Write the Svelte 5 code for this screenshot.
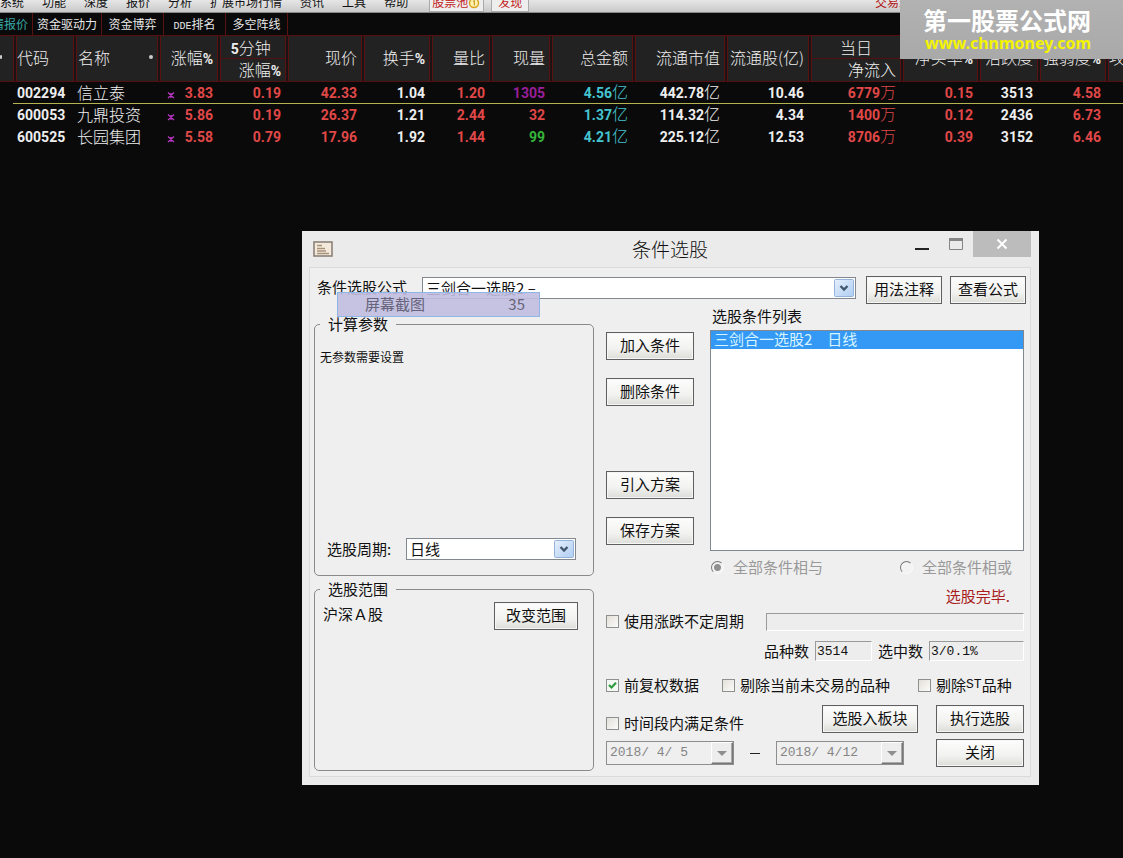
<script>
  const menu = ['系统', '功能', '深度', '报价', '分析', '扩展市场行情', '资讯', '工具', '帮助'];
  const tabs = ['资金驱动力', '资金博弈', 'DDE排名', '多空阵线'];
  const columns = [
    { w: 60, t: '代码', left: true },
    { w: 84, t: '名称', left: true, dot: true },
    { w: 60, t: '涨幅%' },
    { w: 68, t: '5分钟', t2: '涨幅%' },
    { w: 76, t: '现价' },
    { w: 68, t: '换手%' },
    { w: 60, t: '量比' },
    { w: 60, t: '现量' },
    { w: 83, t: '总金额' },
    { w: 92, t: '流通市值' },
    { w: 84, t: '流通股(亿)' },
    { w: 92, t: '当日', t2: '净流入' },
    { w: 77, t: '净买率%' },
    { w: 60, t: '活跃度' },
    { w: 68, t: '强弱度%' }
  ];
  const rows = [
    ['002294', '信立泰', '3.83', '0.19', '42.33', '1.04', '1.20', '1305', '4.56亿', '442.78亿', '10.46', '6779万', '0.15', '3513', '4.58'],
    ['600053', '九鼎投资', '5.86', '0.19', '26.37', '1.21', '2.44', '32', '1.37亿', '114.32亿', '4.34', '1400万', '0.12', '2436', '6.73'],
    ['600525', '长园集团', '5.58', '0.79', '17.96', '1.92', '1.44', '99', '4.21亿', '225.12亿', '12.53', '8706万', '0.39', '3152', '6.46']
  ];
  const base = ['w', 'w', 'r', 'r', 'r', 'w', 'r', 'r', 'c', 'w', 'w', 'r', 'r', 'w', 'r'];
  const volume = ['p', 'r', 'g'];
  const tone = (r, c) => (c === 7 ? volume[r] : base[c]);
</script>

{#snippet heading(t)}{#if t.endsWith('%')}{t.slice(0, -1)}<b>%</b>{:else if t.startsWith('5')}<b>5</b>{t.slice(1)}{:else}{t}{/if}{/snippet}

{#snippet figure(v)}{#if /[亿万]$/.test(v)}{v.slice(0, -1)}<em>{v.slice(-1)}</em>{:else}{v}{/if}{/snippet}

{#snippet arrow()}
  <svg class="arrow" viewBox="0 0 20 18" aria-hidden="true">
    <defs>
      <linearGradient id="blue" x1="0" y1="0" x2="1" y2="1">
        <stop offset="0" stop-color="#e6f0fd" />
        <stop offset="1" stop-color="#afcdf2" />
      </linearGradient>
    </defs>
    <rect x="0.5" y="0.5" width="19" height="17" rx="1" fill="url(#blue)" stroke="#93b3da" />
    <path d="M6.5 7 L10 10.5 L13.5 7" fill="none" stroke="#44566e" stroke-width="2.4" />
  </svg>
{/snippet}

{#snippet dateBox(id, label, value)}
  <span class="date">
    <input {id} type="text" aria-label={label} {value} disabled />
    <button type="button" aria-label={label} disabled>
      <svg viewBox="0 0 10 5" aria-hidden="true"><path d="M0 0H10L5 5Z" fill="#8f8f8f" /></svg>
    </button>
  </span>
{/snippet}

<nav class="menu">
  {#each menu as m}<a href="#menu">{m}</a>{/each}
  <a class="hot" href="#pool">股票池<svg viewBox="0 0 12 12" aria-hidden="true"><circle cx="6" cy="6" r="4.5" fill="#fff2b0" stroke="#d9a520" stroke-width="1.5" /><path d="M5 4.5L6.3 3.5V8.5" fill="none" stroke="#c08a10" /></svg></a>
  <a class="hot" href="#find">发现</a>
  <a class="trade" href="#trade">交易未登录</a>
</nav>

<nav class="tabs">
  <a class="on" href="#quote"><span>行情报价</span></a>
  {#each tabs as t}
    <a href="#tab">{#if t.startsWith('DDE')}<i>DDE</i>{t.slice(3)}{:else}{t}{/if}</a>
  {/each}
</nav>

<table>
  <colgroup>
    <col style:width="13px" />
    {#each columns as c}<col style:width="{c.w}px" />{/each}
    <col />
  </colgroup>
  <thead>
    <tr>
      <th class="first"><span class="dot"></span></th>
      {#each columns as c}
        <th class:left={c.left} class:two={c.t2}>
          {#if c.t2}
            <span class="pair"><span>{@render heading(c.t)}</span><span>{@render heading(c.t2)}</span></span>
          {:else if c.dot}
            <span class="named">{c.t}<span class="dot"></span></span>
          {:else}{@render heading(c.t)}{/if}
        </th>
      {/each}
      <th class="left">攻击</th>
    </tr>
  </thead>
  <tbody>
    {#each rows as row, r}
      <tr class:current={r === 0}>
        <td class="first"></td>
        {#each row as v, c}
          <td class={tone(r, c)} class:left={c < 2} class:name={c === 1}>
            {#if c === 2}
              <span class="mark"><svg viewBox="0 0 8 8" aria-hidden="true"><path d="M1 1.5L7 7M7 1.5L1 7M4 2V7" stroke="currentColor" stroke-width="1.3" /></svg>{v}</span>
            {:else}{@render figure(v)}{/if}
          </td>
        {/each}
        <td></td>
      </tr>
    {/each}
  </tbody>
</table>

<aside class="brand">
  <strong>第一股票公式网</strong>
  <a href="#home">www.chnmoney.com</a>
</aside>

<section class="dialog" aria-labelledby="title">
  <header>
    <svg class="app" viewBox="0 0 20 16" aria-hidden="true">
      <rect x="1" y="1" width="18" height="14" fill="#f3eadb" stroke="#8d8378" stroke-width="1.6" />
      <path d="M4 4.5H9M4 7.5H12M4 10H13M4 12.5H16" stroke="#a8927c" stroke-width="1.4" />
    </svg>
    <h1 id="title">条件选股</h1>
    <div class="controls">
      <button type="button" aria-label="最小化"><svg viewBox="0 0 16 16"><path d="M1 13H15" stroke="#222" stroke-width="2" /></svg></button>
      <button type="button" aria-label="最大化"><svg viewBox="0 0 16 16"><path d="M1.5 3.5H14.5V13.5H1.5Z" fill="none" stroke="#858585" /><path d="M1 3.5H15" stroke="#858585" stroke-width="3" /></svg></button>
      <button type="button" class="close" aria-label="关闭窗口"><svg viewBox="0 0 16 16"><path d="M3.5 3.5L12.5 12.5M12.5 3.5L3.5 12.5" stroke="#fff" stroke-width="2" /></svg></button>
    </div>
  </header>

  <div class="panel">
    <div class="formula">
      <label for="formula">条件选股公式</label>
      <span class="combo"><select id="formula"><option>三剑合一选股2 –</option></select>{@render arrow()}</span>
      <button type="button" class="btn">用法注释</button>
      <button type="button" class="btn">查看公式</button>
    </div>

    <div class="body">
      <div class="side">
        <fieldset class="params">
          <legend>计算参数</legend>
          <p>无参数需要设置</p>
          <div class="period">
            <label for="period">选股周期:</label>
            <span class="combo"><select id="period"><option>日线</option></select>{@render arrow()}</span>
          </div>
        </fieldset>
        <fieldset class="range">
          <legend>选股范围</legend>
          <div class="scope">
            <span>沪深Ａ股</span>
            <button type="button" class="btn">改变范围</button>
          </div>
        </fieldset>
      </div>

      <div class="main">
        <div class="upper">
          <div class="actions">
            <button type="button" class="btn">加入条件</button>
            <button type="button" class="btn">删除条件</button>
            <button type="button" class="btn load">引入方案</button>
            <button type="button" class="btn">保存方案</button>
          </div>
          <div class="list">
            <label for="conditions">选股条件列表</label>
            <select id="conditions" size="12"><option selected>三剑合一选股2　日线</option></select>
            <div class="radios">
              <label><input type="radio" name="join" checked disabled />全部条件相与</label>
              <label><input type="radio" name="join" disabled />全部条件相或</label>
            </div>
          </div>
        </div>

        <p class="done">选股完毕.</p>

        <div class="swing">
          <label><input type="checkbox" />使用涨跌不定周期</label>
          <input class="sunk" type="text" aria-label="不定周期" readonly />
        </div>
        <div class="counts">
          <label for="total">品种数</label><input id="total" class="sunk" type="text" value="3514" readonly />
          <label for="hit">选中数</label><input id="hit" class="sunk wide" type="text" value="3/0.1%" readonly />
        </div>
        <div class="checks">
          <label><input type="checkbox" checked />前复权数据</label>
          <label><input type="checkbox" />剔除当前未交易的品种</label>
          <label><input type="checkbox" />剔除<i>ST</i>品种</label>
        </div>
        <div class="run">
          <label><input type="checkbox" />时间段内满足条件</label>
          <button type="button" class="btn block">选股入板块</button>
          <button type="button" class="btn">执行选股</button>
        </div>
        <div class="dates">
          {@render dateBox('from', '开始日期', '2018/ 4/ 5')}
          <span class="dash"></span>
          {@render dateBox('to', '结束日期', '2018/ 4/12')}
          <button type="button" class="btn">关闭</button>
        </div>
      </div>
    </div>
  </div>

  <div class="ghost"><span>屏幕截图</span><span>35</span></div>
</section>

<style>
  :global(body) {
    margin: 0;
    background: #0a0a0a;
    overflow: hidden;
    font-family: 'Noto Sans CJK SC', sans-serif;
  }
  a { color: inherit; text-decoration: none; }
  p, h1 { margin: 0; font-weight: inherit; }
  button, input, select { box-sizing: border-box; margin: 0; font: inherit; color: inherit; }
  i { font: 13px/14px 'Liberation Mono', monospace; }
  em { font: 300 16px/1px 'Noto Sans CJK SC', sans-serif; }
  b { font: 700 14px/16px Roboto, sans-serif; }

  .menu {
    display: flex;
    align-items: flex-start;
    height: 13px;
    box-sizing: border-box;
    border-bottom: 1px solid #888;
    overflow: hidden;
    background: linear-gradient(#e6e6e6, #c9c9c9);
    color: #111;
    font-size: 12px;
    line-height: 16px;
    white-space: nowrap;
  }
  .menu a { margin: -6px 18px 0 0; }
  .menu a:nth-child(9) { margin-right: 21px; }
  .menu .hot {
    display: flex;
    align-items: flex-start;
    height: 17px;
    padding: 0 3px 0 2px;
    margin-right: 7px;
    border: 1px solid #aaa;
    border-top: 0;
    background: #eee;
    color: #c22222;
  }
  .menu .hot + .hot { padding: 0 6px; }
  .hot svg { width: 12px; height: 12px; margin-top: 3px; }
  .menu .trade { margin-left: auto; margin-right: 188px; color: #b22020; }

  .tabs {
    display: flex;
    height: 22px;
    color: #e8e8e8;
    font-size: 12px;
    line-height: 22px;
    white-space: nowrap;
  }
  .tabs a { padding: 0 4px; min-width: 53px; text-align: center; border-right: 1px solid #5a1212; }
  .tabs i { font-size: 10px; }
  .tabs .on { display: flex; justify-content: flex-end; min-width: 0; width: 24px; color: #37a6a6; }

  table {
    width: 100%;
    table-layout: fixed;
    border-collapse: separate;
    border-spacing: 0;
    color: #eee;
    font: 14px/20px Roboto, 'Noto Sans CJK SC', sans-serif;
    white-space: nowrap;
  }
  th {
    height: 41px;
    padding: 0 4px 4px 3px;
    border: solid #541010;
    border-width: 1px 0;
    background: linear-gradient(90deg, #5a1111 1px, #1c1414 1px, #1c1414 3px, #5a1111 3px, #5a1111 4px, #222 4px);
    font: 300 16px/22px 'Noto Sans CJK SC', sans-serif;
    text-align: right;
    overflow: hidden;
  }
  th.left { padding-left: 4px; text-align: left; }
  th.first { padding: 0 0 4px; background: #222; text-align: left; }
  th.two {
    height: 44px;
    padding-bottom: 1px;
    background:
      linear-gradient(90deg, #5a1111 1px, #1c1414 1px, #1c1414 3px, #5a1111 3px, #5a1111 4px, transparent 4px),
      linear-gradient(#222 22px, #541010 22px, #541010 23px, #222 23px);
  }
  .pair { display: inline-flex; flex-direction: column; vertical-align: top; text-align: left; }
  .pair span + span { padding-left: 8px; }
  .named { display: flex; align-items: center; justify-content: space-between; padding-left: 1px; }
  .dot { display: block; width: 4px; height: 4px; border-radius: 2px; background: #ccc; }
  .first .dot { width: 2px; }
  td {
    height: 20px;
    padding: 1px 4px 0 0;
    border-bottom: 1px solid transparent;
    font-weight: 700;
    text-align: right;
  }
  td.left { padding-left: 4px; text-align: left; }
  td.name { height: 21px; padding-top: 0; font: 300 16px/21px 'Noto Sans CJK SC', sans-serif; }
  .current td:not(.first) { border-color: #b3b34f; }
  .r { color: #e04848; }
  .c { color: #45c4d0; }
  .p { color: #9a1f9a; }
  .g { color: #35b53a; }
  .mark { display: flex; align-items: center; justify-content: space-between; padding-left: 10px; }
  .mark svg { width: 8px; height: 8px; margin-top: 4px; color: #b834c0; }

  .brand {
    position: absolute;
    top: 0;
    right: 0;
    width: 223px;
    height: 59px;
    display: flex;
    flex-direction: column;
    background: linear-gradient(#b2b2b2, #a9a9a9);
    box-sizing: border-box;
    padding: 6px 0 0 23px;
  }
  .brand strong { color: #fff; font-size: 24px; font-weight: 700; line-height: 27px; }
  .brand a { padding-left: 2px; color: #f4f400; font: 700 16px/20px 'Noto Sans', sans-serif; }

  .dialog {
    position: absolute;
    top: 231px;
    left: 302px;
    right: 84px;
    min-width: 737px;
    box-sizing: border-box;
    padding: 0 8px 8px 7px;
    background: #ebebeb;
    color: #111;
    font-size: 15px;
    line-height: 16px;
    white-space: nowrap;
  }
  header {
    display: grid;
    grid-template-columns: 1fr auto 1fr;
    height: 36px;
  }
  .app { width: 20px; height: 16px; margin: 10px 0 0 4px; }
  h1 { font-size: 19px; font-weight: 300; line-height: 35px; color: #111; }
  .controls { display: flex; justify-content: flex-end; align-items: flex-start; }
  .controls button { width: 34px; height: 26px; padding: 0; border: 0; background: none; }
  .controls svg { display: block; width: 16px; height: 16px; margin: auto; }
  .controls .close { width: 58px; background: #bcbcbc; }

  .panel {
    padding: 8px 4px 5px;
    border: 1px solid #dadada;
    background: #efefef;
  }
  .btn {
    width: 88px;
    height: 28px;
    flex: none;
    padding: 0 0 2px;
    border: 1px solid #5f5f5f;
    background: linear-gradient(#fdfdfd, #f2f2f0 60%, #dcdcd8);
    box-shadow: inset 0 0 0 1px #f6f6f6;
    line-height: 16px;
  }
  .combo { position: relative; display: block; height: 22px; }
  .combo select {
    appearance: none;
    width: 100%;
    height: 22px;
    padding: 0 22px 0 3px;
    border: 1px solid #828790;
    border-radius: 0;
    background: #fff;
    line-height: 18px;
  }
  .arrow { position: absolute; top: 2px; right: 2px; width: 20px; height: 18px; pointer-events: none; }

  .formula { display: flex; align-items: flex-start; gap: 8px; padding-left: 3px; }
  .formula label { width: 97px; line-height: 22px; }
  .formula .combo { flex: 1; padding-top: 1px; margin-right: 2px; }
  .formula .arrow { top: 3px; }
  .formula .btn { width: 76px; }

  .body { display: flex; gap: 12px; padding: 4px 2px 0 0; }
  .side { display: flex; flex-direction: column; gap: 5px; width: 280px; padding-top: 8px; }
  fieldset {
    min-width: 0;
    margin: 0;
    padding: 0 5px;
    border: 1px solid #8a8a8a;
    border-radius: 5px;
    box-sizing: border-box;
  }
  legend { padding: 0 8px; line-height: 16px; }
  .params p { padding: 17px 0 173px; font-size: 12px; }
  .period { display: flex; align-items: center; padding: 0 12px 15px 7px; }
  .period label { flex: 1; }
  .period .combo { width: 170px; }
  .range { flex: 1; }
  .scope { display: flex; align-items: center; justify-content: space-between; padding: 5px 10px 0 3px; }
  .scope span { margin-bottom: 4px; }
  .scope .btn { width: 84px; }

  .main { flex: 1; display: flex; flex-direction: column; padding-bottom: 4px; }
  .upper { display: flex; gap: 16px; }
  .actions { display: flex; flex-direction: column; gap: 18px; padding-top: 24px; }
  .load { margin-top: 47px; }
  .list { flex: 1; display: flex; flex-direction: column; }
  .list > label { padding-left: 2px; }
  #conditions {
    height: 221px;
    margin-top: 6px;
    padding: 0;
    border: 1px solid #828790;
    border-radius: 0;
    background: #fff;
    overflow: hidden;
    outline: 0;
  }
  #conditions option {
    display: flex;
    align-items: center;
    box-sizing: border-box;
    height: 18px;
    min-height: 0;
    padding: 0 3px 3px;
    line-height: 15px;
  }
  #conditions option:checked {
    background: linear-gradient(#3399f5, #3399f5);
    color: #d8f4ff;
    -webkit-text-fill-color: #d8f4ff;
  }
  .main label { display: flex; align-items: center; height: 16px; }
  .radios { display: flex; justify-content: space-between; padding: 8px 12px 0 0; color: #999; }
  input[type='radio'], input[type='checkbox'] {
    appearance: none;
    flex: none;
    width: 13px;
    height: 13px;
    border: 1px solid #8e8f8f;
    background: linear-gradient(135deg, #e3e0d8, #fbfbfa);
  }
  input[type='checkbox'] { margin-right: 5px; }
  input[type='checkbox']:checked {
    background: url("data:image/svg+xml,%3Csvg xmlns='http://www.w3.org/2000/svg' viewBox='0 0 11 11'%3E%3Crect width='11' height='11' fill='%23f4f8f2'/%3E%3Cpath d='M2 5L4.5 7.5L9 2.8' fill='none' stroke='%232e9a3c' stroke-width='2.2'/%3E%3C/svg%3E");
  }
  input[type='radio'] {
    margin: 0 9px 0 1px;
    border: 1px solid;
    border-color: #777 #fafafa #fafafa #777;
    border-radius: 50%;
    background: #f2f2f2;
  }
  input[type='radio']:checked { background: radial-gradient(circle, #909090 3px, #f2f2f2 4px); }

  .done { padding: 13px 14px 9px 0; text-align: right; color: #a81c1c; }
  .sunk {
    height: 20px;
    padding: 0 1px;
    border: 1px solid;
    border-color: #9a9a9a #fff #fff #9a9a9a;
    border-radius: 0;
    background: #ededed;
    font: 13px/16px 'Liberation Mono', monospace;
  }
  .swing { display: flex; align-items: flex-start; height: 18px; }
  .swing label { width: 160px; }
  .swing .sunk { flex: 1; height: 18px; }
  .counts { display: flex; align-items: center; justify-content: flex-end; gap: 6px; padding-top: 10px; }
  .counts .sunk { width: 57px; }
  .counts .wide { width: 95px; }
  .checks { display: grid; grid-template-columns: 116px 196px 1fr; padding-top: 16px; }
  .run { display: flex; align-items: flex-end; gap: 18px; padding-top: 12px; }
  .run label { flex: 1; padding-bottom: 2px; }
  .run .block { width: 96px; }
  .dates { display: flex; align-items: center; padding-top: 6px; }
  .dates .btn { margin-left: auto; }
  .date {
    display: flex;
    width: 128px;
    height: 24px;
    box-sizing: border-box;
    border: 1px solid #8e8e8e;
  }
  .date input {
    flex: 1;
    min-width: 0;
    padding: 0 3px;
    border: 0;
    background: none;
    color: #858585;
    font: 13px/16px 'Liberation Mono', monospace;
  }
  .date button {
    width: 22px;
    padding: 0;
    border: 1px solid;
    border-color: #fff #777 #777 #fff;
    box-shadow: inset -1px -1px #aaa;
    background: #ededed;
  }
  .date svg { display: block; width: 10px; height: 5px; margin: auto; }
  .dash { width: 10px; height: 1px; margin: 0 16px; background: #222; }

  .ghost {
    position: absolute;
    top: 61px;
    left: 35px;
    width: 203px;
    height: 25px;
    box-sizing: border-box;
    display: flex;
    justify-content: space-between;
    padding: 0 14px 0 27px;
    border: 1px solid #8fb6e6;
    background: rgba(192, 188, 224, 0.9);
    color: #66647a;
    line-height: 22px;
  }
</style>
